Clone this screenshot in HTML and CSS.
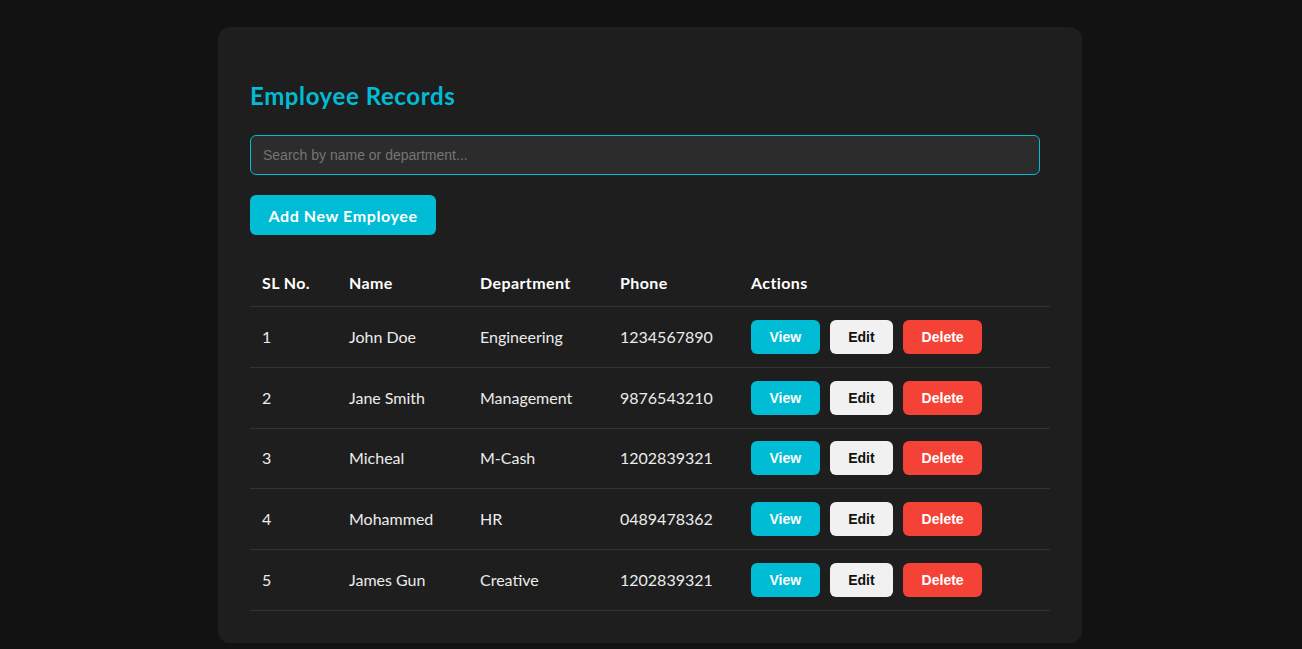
FILE: index.html
```html
<!DOCTYPE html>
<html>
<head>
<meta charset="utf-8">
<title>Employee Records</title>
<link rel="stylesheet" href="styles.css">
</head>
<body>
<div class="card">
  <h2 class="title">Employee Records</h2>
  <input class="search" type="text" placeholder="Search by name or department...">
  <button class="add-btn">Add New Employee</button>
  <table class="records">
    <colgroup>
      <col class="c1"><col class="c2"><col class="c3"><col class="c4"><col class="c5">
    </colgroup>
    <thead>
      <tr><th>SL No.</th><th>Name</th><th>Department</th><th>Phone</th><th>Actions</th></tr>
    </thead>
    <tbody>
      <tr><td>1</td><td>John Doe</td><td>Engineering</td><td>1234567890</td><td><div class="actions"><button class="btn view">View</button><button class="btn edit">Edit</button><button class="btn del">Delete</button></div></td></tr>
      <tr><td>2</td><td>Jane Smith</td><td>Management</td><td>9876543210</td><td><div class="actions"><button class="btn view">View</button><button class="btn edit">Edit</button><button class="btn del">Delete</button></div></td></tr>
      <tr><td>3</td><td>Micheal</td><td>M-Cash</td><td>1202839321</td><td><div class="actions"><button class="btn view">View</button><button class="btn edit">Edit</button><button class="btn del">Delete</button></div></td></tr>
      <tr><td>4</td><td>Mohammed</td><td>HR</td><td>0489478362</td><td><div class="actions"><button class="btn view">View</button><button class="btn edit">Edit</button><button class="btn del">Delete</button></div></td></tr>
      <tr><td>5</td><td>James Gun</td><td>Creative</td><td>1202839321</td><td><div class="actions"><button class="btn view">View</button><button class="btn edit">Edit</button><button class="btn del">Delete</button></div></td></tr>
    </tbody>
  </table>
</div>
</body>
</html>
```

FILE: styles.css
```css
html, body {
  margin: 0;
  background: #121212;
}
body {
  padding-top: 27px;
  padding-right: 2px;
  font-family: Lato, "Open Sans", sans-serif;
  color: #e0e0e0;
}
.card {
  width: 800px;
  margin: 0 auto;
  padding: 32px;
  background: #1e1e1e;
  border-radius: 12px;
}
.title {
  margin: 21px 0 23px;
  font-size: 24px;
  line-height: 32px;
  font-weight: 700;
  letter-spacing: 0.6px;
  color: #00bcd4;
}
.search {
  display: block;
  box-sizing: border-box;
  width: 790px;
  height: 40px;
  padding: 0 12px;
  margin: 0 0 20px;
  background: #2c2c2c;
  border: 1px solid #00bcd4;
  border-radius: 6px;
  color: #e0e0e0;
  font-family: "Liberation Sans", Arial, sans-serif;
  font-size: 14px;
  outline: none;
}
.search::placeholder {
  color: #757575;
}
.add-btn {
  display: block;
  height: 40px;
  width: 186px;
  padding: 0;
  background: #00bcd4;
  color: #fff;
  border: none;
  border-radius: 6px;
  font-family: Lato, "Open Sans", sans-serif;
  font-weight: 700;
  font-size: 16px;
  letter-spacing: 0.6px;
  margin-bottom: 26px;
}
.records {
  width: 800px;
  border-collapse: collapse;
  table-layout: fixed;
  font-size: 16px;
}
.c1 { width: 87px; }
.c2 { width: 131px; }
.c3 { width: 140px; }
.c4 { width: 131px; }
.c5 { width: 311px; }
.records th {
  text-align: left;
  font-weight: 700;
  letter-spacing: 0.4px;
  color: #ffffff;
  padding: 12px 12px 13px;
  line-height: 20px;
  border-bottom: 1px solid #333;
}
.records td {
  padding: 12.9px 12px;
  line-height: 34px;
  border-bottom: 1px solid #333;
  color: #ececec;
  white-space: nowrap;
}
.actions {
  display: flex;
  gap: 10px;
}
.btn {
  height: 34px;
  padding: 0 18.5px;
  border: none;
  border-radius: 6px;
  font-family: "Liberation Sans", Arial, sans-serif;
  font-weight: 700;
  font-size: 14px;
  line-height: 34px;
}
.view { background: #00bcd4; color: #fff; }
.edit { background: #f1f1f1; color: #111; }
.del { background: #f44336; color: #fff; }
```
